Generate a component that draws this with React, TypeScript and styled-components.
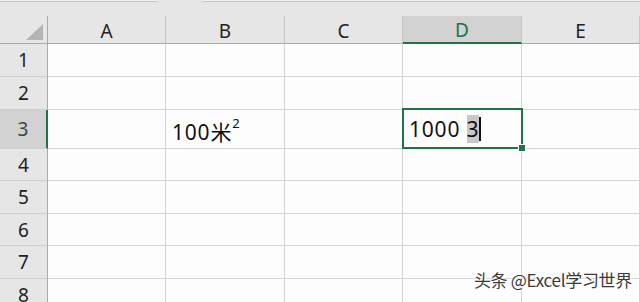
import styled, { createGlobalStyle } from 'styled-components';

const GlobalStyle = createGlobalStyle`
  html, body { margin: 0; padding: 0; background: #e6e6e6; }
  body { font-family: "Noto Sans", "Noto Sans CJK SC", sans-serif; }
`;

const COLS = ['A', 'B', 'C', 'D', 'E'];
const COL_WIDTHS = [118, 119, 118, 119, 118];
const ROW_HEIGHTS = [33, 33, 39, 32, 33, 32, 33, 33];
const ACTIVE_COL = 'D';
const ACTIVE_ROW = 3;

const Page = styled.div`
  position: relative;
  width: 640px;
  height: 302px;
  overflow: hidden;
  background: #e6e6e6;
`;

const TopStrip = styled.div`
  height: 16px;
  display: flex;
  gap: 46px;
  align-items: flex-start;
`;

const StripBox = styled.div<{ $w: number }>`
  width: ${p => p.$w}px;
  height: 1px;
  background: #f1f1f1;
  border-bottom: 1px solid #c4c4c4;
  flex: ${p => (p.$w ? '0 0 auto' : '1')};
`;

const Sheet = styled.div`
  display: grid;
  grid-template-columns: 48px ${COL_WIDTHS.map(w => `${w}px`).join(' ')};
  grid-template-rows: 28px ${ROW_HEIGHTS.map(h => `${h}px`).join(' ')};
`;

const Corner = styled.div`
  box-sizing: border-box;
  background: #e6e6e6;
  border-right: 1px solid #ababab;
  border-bottom: 1px solid #ababab;
  display: flex;
  align-items: flex-end;
  justify-content: flex-end;
  padding: 0 4px 3px 0;
`;

const ColHead = styled.div<{ $active?: boolean }>`
  box-sizing: border-box;
  background: ${p => (p.$active ? '#d2d2d2' : '#e6e6e6')};
  border-right: 1px solid #c6c6c6;
  border-bottom: ${p => (p.$active ? '2px solid #217346' : '1px solid #ababab')};
  color: ${p => (p.$active ? '#217346' : '#222')};
  font-size: 19px;
  display: flex;
  align-items: center;
  justify-content: center;
  padding-top: 2px;
`;

const RowHead = styled.div<{ $active?: boolean }>`
  box-sizing: border-box;
  background: ${p => (p.$active ? '#d2d2d2' : '#e6e6e6')};
  border-right: ${p => (p.$active ? '2px solid #217346' : '1px solid #ababab')};
  border-bottom: 1px solid #cfcfcf;
  color: ${p => (p.$active ? '#364a3e' : '#222')};
  font-size: 19px;
  display: flex;
  align-items: center;
  justify-content: center;
`;

const Cell = styled.div<{ $lift?: number }>`
  position: relative;
  box-sizing: border-box;
  background: #fdfdfd;
  border-right: 1px solid #d4d4d4;
  border-bottom: 1px solid #d4d4d4;
  display: flex;
  align-items: center;
  padding: ${p => p.$lift ?? 0}px 0 0 6px;
  font-size: 21px;
  letter-spacing: 0.8px;
  color: #111;
  white-space: nowrap;
`;

const Sup = styled.sup`
  font-size: 13px;
  vertical-align: 0;
  position: relative;
  top: -8px;
  margin-left: 0;
`;

const Selection = styled.div`
  position: absolute;
  z-index: 2;
  left: -1px;
  top: -2px;
  right: -2px;
  bottom: -1px;
  border: 2px solid #217346;
  pointer-events: none;
`;

const Handle = styled.div`
  position: absolute;
  right: -5px;
  bottom: -5px;
  width: 6px;
  height: 6px;
  background: #217346;
  border: 1px solid #fff;
`;

const Marked = styled.span`
  background: #c8c8c8;
`;

const Caret = styled.span`
  display: inline-block;
  width: 2px;
  height: 24px;
  background: #111;
  vertical-align: middle;
`;

const Watermark = styled.div`
  position: absolute;
  z-index: 3;
  right: 8px;
  bottom: 10px;
  font-family: "Noto Sans CJK SC", "Noto Sans", sans-serif;
  font-size: 17px;
  color: #3a3a3a;
  text-shadow: 0 0 2px #fff, 0 0 2px #fff, 1px 1px 1px #fff;
  letter-spacing: -0.3px;
`;

function cellContent(col: string, row: number) {
  if (col === 'B' && row === 3) {
    return (
      <>
        100米<Sup>2</Sup>
      </>
    );
  }
  if (col === 'D' && row === 3) {
    return (
      <>
        1000&nbsp;<Marked>3</Marked>
        <Caret />
        <Selection>
          <Handle />
        </Selection>
      </>
    );
  }
  return null;
}

export default function App() {
  return (
    <Page>
      <GlobalStyle />
      <TopStrip>
        <StripBox $w={157} />
        <StripBox $w={0} />
      </TopStrip>
      <Sheet>
        <Corner>
          <svg width="17" height="16" viewBox="0 0 17 16">
            <polygon points="17,0 17,16 0,16" fill="#b4b4b4" />
          </svg>
        </Corner>
        {COLS.map(c => (
          <ColHead key={c} $active={c === ACTIVE_COL}>
            {c}
          </ColHead>
        ))}
        {ROW_HEIGHTS.map((_, i) => {
          const row = i + 1;
          return [
            <RowHead key={`h${row}`} $active={row === ACTIVE_ROW}>
              {row}
            </RowHead>,
            ...COLS.map(c => (
              <Cell key={`${c}${row}`} $lift={c === 'B' && row === 3 ? 4 : 0}>
                {cellContent(c, row)}
              </Cell>
            )),
          ];
        })}
      </Sheet>
      <Watermark>头条 @Excel学习世界</Watermark>
    </Page>
  );
}
